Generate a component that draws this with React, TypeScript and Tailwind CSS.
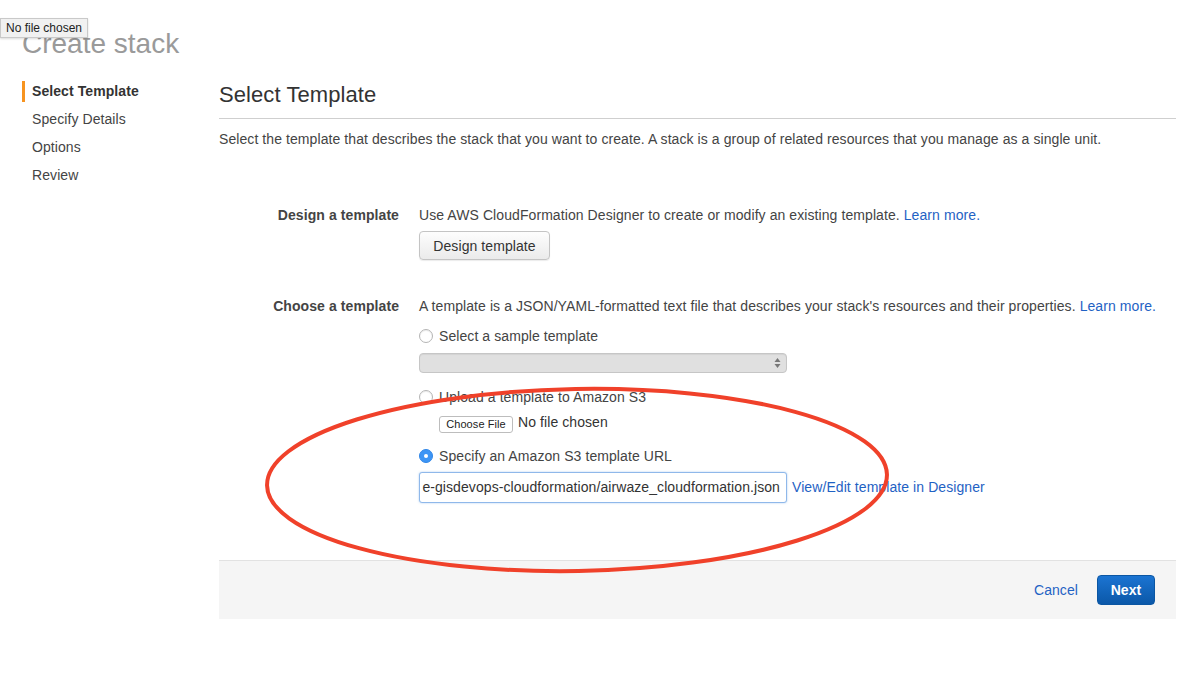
import React from "react";

const font = { fontFamily: '"Liberation Sans", Arial, Helvetica, sans-serif' };

function Radio({ checked }: { checked?: boolean }) {
  if (checked) {
    return (
      <span className="flex h-[14px] w-[14px] items-center justify-center rounded-full bg-[#3d95f5] border border-[#2f86e8]">
        <span className="h-[4px] w-[4px] rounded-full bg-white" />
      </span>
    );
  }
  return <span className="block h-[14px] w-[14px] rounded-full border border-[#b5b5b5] bg-white shadow-[inset_0_1px_1px_rgba(0,0,0,0.08)]" />;
}

export default function App() {
  return (
    <div className="relative min-h-[686px] w-[1193px] bg-white text-[#444]" style={font}>
      {/* tooltip */}
      <div className="absolute left-0 top-[18px] z-20 flex h-[20px] w-[88px] items-center border border-[#c9c9c9] bg-[#f1f1f1] pl-[5px] text-[12px] text-[#222] shadow-[0_1px_2px_rgba(0,0,0,0.15)]">
        No file chosen
      </div>

      {/* red ellipse annotation */}
      <svg className="pointer-events-none absolute left-0 top-0 z-10" width="1193" height="686">
        <ellipse cx="577" cy="480" rx="310" ry="91" fill="none" stroke="#f0412a" strokeWidth="4" transform="rotate(-1 577 480)" />
      </svg>

      <div className="pl-[22px] pt-[28px]">
        <h1 className="h-[32px] text-[28px] leading-[32px] text-[#9a9a9a]">Create stack</h1>
      </div>

      <div className="flex tracking-[0.08px]">
        <nav className="w-[219px] pl-[22px] pt-[17px] text-[14px]">
          <div className="flex h-[28px] items-center">
            <span className="h-[21px] w-[3px] bg-[#f79420]" />
            <span className="ml-[7px] font-bold text-[#333]">Select Template</span>
          </div>
          <div className="flex h-[28px] items-center pl-[10px]">Specify Details</div>
          <div className="flex h-[28px] items-center pl-[10px]">Options</div>
          <div className="flex h-[28px] items-center pl-[10px]">Review</div>
        </nav>

        <main className="w-[957px] pt-[22px]">
          <h2 className="h-[26px] text-[22px] leading-[26px] text-[#333]">Select Template</h2>
          <div className="mt-[10px] h-px bg-[#cfcfcf]" />
          <p className="mt-[10px] h-[20px] text-[14px] leading-[20px]">
            Select the template that describes the stack that you want to create. A stack is a group of related resources that you manage as a single unit.
          </p>

          {/* Design a template */}
          <div className="mt-[56px] flex text-[14px]">
            <div className="w-[180px] text-right font-bold leading-[20px]">Design a template</div>
            <div className="ml-[20px]">
              <div className="h-[20px] leading-[20px]">
                Use AWS CloudFormation Designer to create or modify an existing template.{" "}
                <span className="text-[#1f62c4]">Learn more.</span>
              </div>
              <button className="mt-[6px] flex h-[29px] w-[131px] items-center justify-center rounded-[4px] border border-[#c4c4c4] bg-gradient-to-b from-[#fdfdfd] to-[#ebebeb] pt-[1px] text-[14px] text-[#333] shadow-[0_1px_1px_rgba(0,0,0,0.08)]">
                Design template
              </button>
            </div>
          </div>

          {/* Choose a template */}
          <div className="mt-[36px] flex text-[14px]">
            <div className="w-[180px] text-right font-bold leading-[20px]">Choose a template</div>
            <div className="ml-[20px]">
              <div className="h-[20px] leading-[20px]">
                A template is a JSON/YAML-formatted text file that describes your stack's resources and their properties.{" "}
                <span className="text-[#1f62c4]">Learn more.</span>
              </div>

              <div className="mt-[10px] flex h-[20px] items-center">
                <Radio />
                <span className="ml-[6px]">Select a sample template</span>
              </div>
              <div className="mt-[7px] flex h-[20px] w-[368px] items-center justify-end rounded-[4px] border border-[#c6c6c6] bg-[#e0e0e0] pr-[5px] shadow-[inset_0_1px_1px_rgba(0,0,0,0.06)]">
                <svg width="7" height="12" viewBox="0 0 7 12">
                  <path d="M3.5 1 L6.5 5 L0.5 5 Z" fill="#777" />
                  <path d="M3.5 11 L6.5 7 L0.5 7 Z" fill="#777" />
                </svg>
              </div>

              <div className="mt-[14px] flex h-[20px] items-center">
                <Radio />
                <span className="ml-[6px]">Upload a template to Amazon S3</span>
              </div>
              <div className="mt-[7px] flex h-[20px] items-center pl-[20px]">
                <button className="flex h-[17px] w-[74px] items-center justify-center rounded-[3px] border border-[#bdbdbd] bg-white text-[11px] text-[#222]">
                  Choose File
                </button>
                <span className="ml-[5px] -mt-[3px] text-[14px] text-[#333]">No file chosen</span>
              </div>

              <div className="mt-[12px] flex h-[20px] items-center">
                <Radio checked />
                <span className="ml-[6px]">Specify an Amazon S3 template URL</span>
              </div>
              <div className="mt-[6px] flex items-center">
                <div className="flex h-[31px] w-[368px] items-center justify-end overflow-hidden whitespace-nowrap rounded-[3px] border border-[#8fb8ea] bg-white pr-[6px] text-[14px] text-[#333] shadow-[0_0_2px_rgba(80,150,230,0.5)]">
                  e-gisdevops-cloudformation/airwaze_cloudformation.json
                </div>
                <span className="ml-[5px] text-[14px] text-[#1f62c4]">View/Edit template in Designer</span>
              </div>
            </div>
          </div>

          {/* footer */}
          <div className="mt-[57px] flex h-[59px] items-center justify-end border-t border-[#e2e2e2] bg-[#f5f5f5] pr-[21px]">
            <span className="text-[14px] text-[#1f62c4]">Cancel</span>
            <button className="ml-[19px] flex h-[30px] w-[58px] items-center justify-center rounded-[4px] border border-[#0b56a3] bg-gradient-to-b from-[#1b74d2] to-[#0b58a8] text-[14px] font-bold text-white">
              Next
            </button>
          </div>
        </main>
      </div>
    </div>
  );
}
